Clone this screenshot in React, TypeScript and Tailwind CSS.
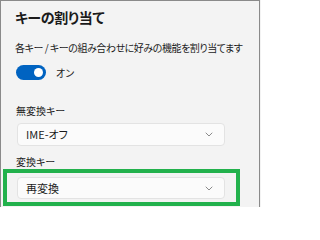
export default function App() {
  const font = { fontFamily: '"Noto Sans CJK JP", "Noto Sans", sans-serif' };
  return (
    <div className="h-[207px] w-[261px] overflow-hidden bg-[#f3f3f3]" style={font}>
      <div className="h-[207px] w-[260px] border-l border-r border-t border-[#8a8a8a] bg-[#f3f3f3] text-[#1b1b1b] [font-feature-settings:'palt']">
        {/* タイトル */}
        <div className="pl-[14px] pt-[6px] text-[14px] font-semibold leading-[20px] tracking-[-0.3px]">
          キーの割り当て
        </div>

        <div className="mt-[13px] whitespace-nowrap pl-[14px] text-[10px] leading-[16px] tracking-[-0.45px]">
          各キー / キーの組み合わせに好みの機能を割り当てます
        </div>

        {/* トグル */}
        <div className="mt-[9px] flex h-[15px] items-center gap-[10px] pl-[15px]">
          <div className="flex h-[15px] w-[30px] items-center justify-end rounded-full bg-[#0063c1] pr-[3px]">
            <div className="h-[9px] w-[9px] rounded-full bg-white" />
          </div>
          <span className="text-[10px] leading-[15px]">オン</span>
        </div>

        {/* 無変換キー */}
        <div className="mt-[24px] pl-[15px] text-[10px] leading-[14px]">無変換キー</div>
        <div className="ml-[16px] mt-[5px] flex h-[23px] w-[208px] items-center justify-between rounded-[4px] border border-[#e3e3e3] bg-[#fbfbfb] pl-[8px] pr-[11px] text-[11px]">
          <span>IME-オフ</span>
          <Chevron />
        </div>

        {/* 変換キー */}
        <div className="mt-[9px] pl-[15px] text-[10px] leading-[14px]">変換キー</div>
        <div className="ml-[2px] w-[237px] border-4 border-[#22b14c] pb-[3px] pl-[10px] pt-[4px]">
          <div className="flex h-[22px] w-[208px] items-center justify-between rounded-[4px] border border-[#e3e3e3] bg-[#fbfbfb] pl-[8px] pr-[11px] text-[11px]">
            <span>再変換</span>
            <Chevron />
          </div>
        </div>
      </div>
    </div>
  );
}

function Chevron() {
  return (
    <svg width="8" height="5" viewBox="0 0 8 5" fill="none">
      <path d="M1 1l3 3 3-3" stroke="#8a8a8a" strokeWidth="1" strokeLinecap="round" strokeLinejoin="round" />
    </svg>
  );
}
